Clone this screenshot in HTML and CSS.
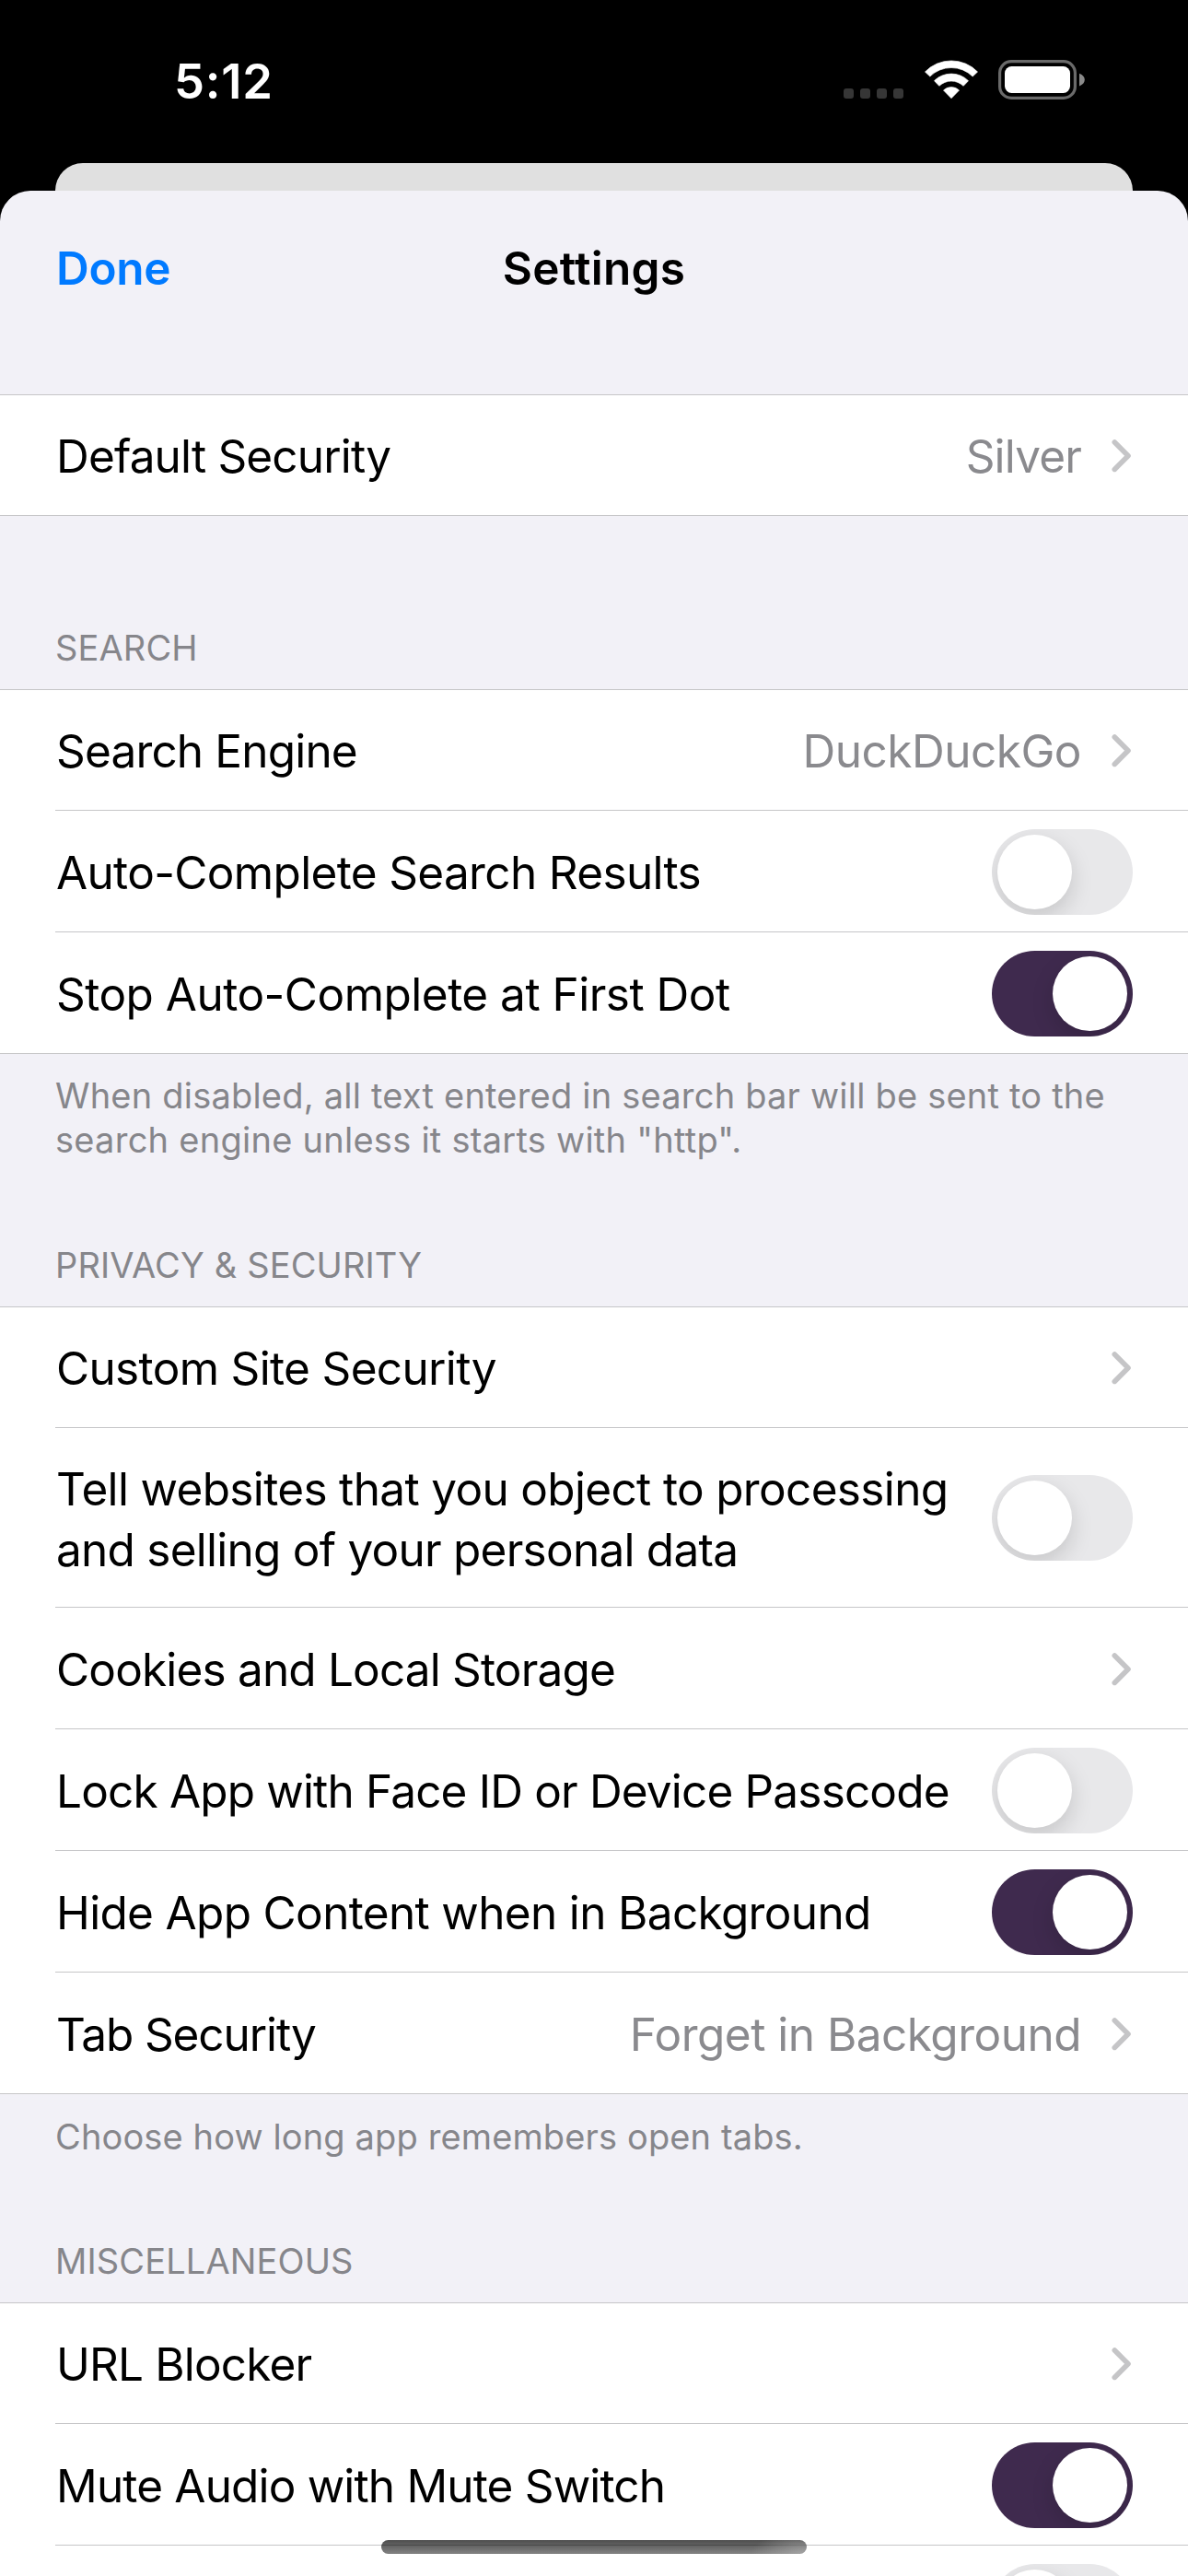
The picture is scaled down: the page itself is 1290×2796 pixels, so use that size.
FILE: index.html
```html
<!DOCTYPE html>
<html lang="en">
<head>
<meta charset="utf-8">
<title>Settings</title>
<link rel="stylesheet" href="styles.css">
</head>
<body>
<svg class="defs" aria-hidden="true">
  <symbol id="chevron" viewBox="0 0 22 38">
    <path d="M3.3 4 18 18.7 3.3 33.4" fill="none" stroke="#c5c5c7" stroke-width="5.6" stroke-linecap="round" stroke-linejoin="round"/>
  </symbol>
</svg>
<div class="screen">
  <header class="status">
    <div class="time">5:12</div>
    <div class="indicators">
      <div class="signal"><i></i><i></i><i></i><i></i></div>
      <svg class="wifi" viewBox="371 75 173 126" aria-label="Wi-Fi">
        <g fill="#fff" stroke="#fff" stroke-width="2" stroke-linejoin="round">
          <path d="M372 114A119 119 0 0 1 543 114L527 129A99 99 0 0 0 388 129Z"/>
          <path d="M402 143A79 79 0 0 1 513 143L497 160A57 57 0 0 0 418 160Z"/>
          <path d="M432 174A37 37 0 0 1 483 174L457.5 200Z"/>
        </g>
      </svg>
      <svg class="battery" viewBox="0 0 94 43" aria-label="Battery">
        <rect x="1.6" y="1.6" width="81.8" height="39.8" rx="12.5" fill="none" stroke="#6a6a6a" stroke-width="3.2"/>
        <rect x="7" y="7" width="71" height="29" rx="7.5" fill="#fff"/>
        <path d="M88 14.8C92 16.4 93.8 18.6 93.8 21.6S92 26.8 88 28.4Z" fill="#8a8a8a"/>
      </svg>
    </div>
  </header>
  <div class="backsheet"></div>
  <main class="sheet">
    <nav class="nav">
      <div class="done">Done</div>
      <h1 class="title">Settings</h1>
    </nav>

    <section class="group">
      <div class="row"><div class="cell"><div class="label tight">Default Security</div><div class="value tight">Silver</div><svg class="chevron"><use href="#chevron"/></svg></div></div>
    </section>

    <h2 class="heading first">SEARCH</h2>
    <section class="group">
      <div class="row"><div class="cell"><div class="label tight">Search Engine</div><div class="value loose">DuckDuckGo</div><svg class="chevron"><use href="#chevron"/></svg></div></div>
      <div class="row"><div class="cell"><div class="label">Auto-Complete Search Results</div><div class="toggle"></div></div></div>
      <div class="row"><div class="cell"><div class="label loose">Stop Auto-Complete at First Dot</div><div class="toggle on"></div></div></div>
    </section>
    <p class="note wide">When disabled, all text entered in search bar will be sent to the<br><span class="second">search engine unless it starts with "http".</span></p>

    <h2 class="heading">PRIVACY &amp; SECURITY</h2>
    <section class="group">
      <div class="row"><div class="cell"><div class="label">Custom Site Security</div><svg class="chevron"><use href="#chevron"/></svg></div></div>
      <div class="row tall"><div class="cell"><div class="label">Tell websites that you object to processing<br><span class="tight">and selling of your personal data</span></div><div class="toggle"></div></div></div>
      <div class="row"><div class="cell"><div class="label tight">Cookies and Local Storage</div><svg class="chevron"><use href="#chevron"/></svg></div></div>
      <div class="row"><div class="cell"><div class="label tight">Lock App with Face ID or Device Passcode</div><div class="toggle"></div></div></div>
      <div class="row"><div class="cell"><div class="label">Hide App Content when in Background</div><div class="toggle on"></div></div></div>
      <div class="row"><div class="cell"><div class="label tighter">Tab Security</div><div class="value loose">Forget in Background</div><svg class="chevron"><use href="#chevron"/></svg></div></div>
    </section>
    <p class="note low">Choose how long app remembers open tabs.</p>

    <h2 class="heading after-low">MISCELLANEOUS</h2>
    <section class="group">
      <div class="row"><div class="cell"><div class="label tight">URL Blocker</div><svg class="chevron"><use href="#chevron"/></svg></div></div>
      <div class="row"><div class="cell"><div class="label tight">Mute Audio with Mute Switch</div><div class="toggle on"></div></div></div>
      <div class="row"><div class="cell"><div class="toggle"></div></div></div>
    </section>
  </main>
  <div class="home"></div>
</div>
</body>
</html>
```
FILE: styles.css
```css
* { box-sizing: border-box; }

body {
  margin: 0;
  background: #000;
  font-family: Inter, "Liberation Sans", sans-serif;
  color: #000;
}

.defs { display: block; width: 0; height: 0; }

.screen {
  position: relative;
  display: flex;
  flex-direction: column;
  width: 1290px;
  height: 2796px;
  overflow: hidden;
  background: #000;
}

/* Status bar */
.status {
  flex: none;
  display: flex;
  justify-content: space-between;
  height: 177px;
  padding: 0 112px 0 189px;
  color: #fff;
}

.time {
  padding-top: 55px;
  font-size: 52.5px;
  line-height: 66px;
  font-weight: 600;
  letter-spacing: 0.8px;
}

.indicators {
  display: flex;
  align-items: flex-start;
  padding-top: 65px;
}

.signal {
  display: flex;
  gap: 7px;
  margin: 31px 23px 0 0;
}

.signal i {
  width: 11px;
  height: 11px;
  border-radius: 3px;
  background: #363636;
}

.wifi { width: 58px; height: 42px; margin-right: 22px; }
.battery { width: 94px; height: 43px; }

/* Stacked sheets */
.backsheet {
  flex: none;
  height: 30px;
  margin: 0 60px;
  border-radius: 30px 30px 0 0;
  background: #e0e0e0;
}

.sheet {
  flex: 1;
  min-height: 0;
  overflow: hidden;
  border-radius: 33px 33px 0 0;
  background: #f2f1f7;
}

.nav {
  display: grid;
  grid-template-columns: 1fr auto 1fr;
  height: 221px;
  padding: 51px 60px 0;
  font-size: 49.5px;
  line-height: 66px;
  font-weight: 600;
}

.done { padding-left: 1px; color: #007aff; letter-spacing: -0.3px; }
.title { margin: 0; font: inherit; letter-spacing: 0.25px; }

.heading,
.note {
  margin: 0;
  padding: 0 60px;
  font-size: 38px;
  line-height: 48px;
  font-weight: 400;
  letter-spacing: 0.13px;
  color: #86868b;
  white-space: nowrap;
}

.heading { padding-top: 88px; padding-bottom: 21px; }
.heading.first { padding-top: 119px; }
.note { padding-top: 21px; }
.note.low { padding-top: 22px; }
.heading.after-low { padding-top: 87px; }
.wide { letter-spacing: 0.21px; }
.second { letter-spacing: 0.26px; }

/* Grouped rows */
.group { background: #fff; }

.row { height: 132px; padding-left: 60px; }

.row:first-child { border-top: 1px solid #c6c6c8; }

.row:last-child {
  padding-left: 0;
  border-bottom: 1px solid #c6c6c8;
}

.row:last-child .cell { padding-left: 60px; border-bottom: 0; }

.cell {
  display: flex;
  align-items: center;
  height: 100%;
  padding: 2px 60px 0 0;
  border-bottom: 1px solid #c6c6c8;
}

.row:first-child .cell { padding-top: 1px; }
.tall { height: 195px; }
.tall .cell { padding-top: 1px; }
.tall .label { padding-top: 3px; }

.label,
.value {
  font-size: 49.5px;
  line-height: 66px;
  letter-spacing: -0.66px;
  white-space: nowrap;
}

.label { flex: 1; padding-left: 1px; }
.value { color: #8a8a8e; margin-right: 33px; }
.tight.label, .tight.value { letter-spacing: -0.83px; }
.label .tight { letter-spacing: -0.75px; }
.tighter.label { letter-spacing: -1.1px; }
.loose.label, .loose.value { letter-spacing: -0.51px; }

.chevron { width: 22px; height: 38px; margin-right: 1px; }

.toggle {
  display: flex;
  align-items: center;
  flex: none;
  width: 153px;
  height: 93px;
  margin-left: auto;
  padding: 0 6px;
  border-radius: 47px;
  background: #e8e8ea;
  overflow: hidden;
}

.toggle::before {
  content: "";
  width: 81px;
  height: 81px;
  border-radius: 50%;
  background: #fff;
  box-shadow: 0 9px 24px rgba(0, 0, 0, 0.15);
}

.toggle.on { justify-content: flex-end; background: #3f2a4e; }

/* Home indicator floats over the list */
.home {
  position: absolute;
  left: 414px;
  bottom: 24px;
  width: 462px;
  height: 15px;
  border-radius: 7.5px;
  background:
    radial-gradient(60px 26px at 100% 100%, rgba(190, 190, 190, 0.6), rgba(190, 190, 190, 0)),
    linear-gradient(transparent 5px, rgba(0, 0, 0, 0.25) 5px, rgba(0, 0, 0, 0.25) 6px, transparent 6px),
    linear-gradient(#4e4e4e, #828282);
}
```
